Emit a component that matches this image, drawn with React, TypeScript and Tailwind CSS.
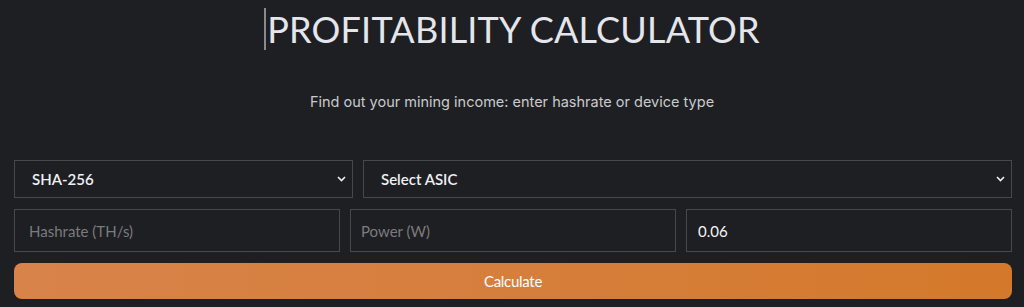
import React, { useState } from 'react';

const Chevron = () => (
  <svg width="9" height="6" viewBox="0 0 9 6" className="shrink-0">
    <path d="M1 1l3.5 3.5L8 1" fill="none" stroke="#f0f0f0" strokeWidth="1.6" />
  </svg>
);

export default function App() {
  const [hashrate, setHashrate] = useState('');
  const [power, setPower] = useState('');
  const [price, setPrice] = useState('0.06');

  return (
    <div className="w-[1024px] h-[307px] bg-[#1e1f22] overflow-hidden font-['Lato',sans-serif]">
      {/* заголовок */}
      <div className="flex justify-center pt-[6px]">
        <div className="flex items-center">
          <span className="w-[2px] h-[42px] bg-[#8a8a8a] mr-[1px]"></span>
          <h1 className="text-[36px] leading-[46px] font-normal text-[#e4e6ec] tracking-[0.2px]">PROFITABILITY CALCULATOR</h1>
        </div>
      </div>
      <p className="mt-[40px] text-center font-['Inter',sans-serif] text-[14.5px] leading-[20px] text-[#c9cacd]">
        Find out your mining income: enter hashrate or device type
      </p>

      <div className="mt-[48px] pl-[14px] pr-[12px] flex flex-col gap-[11px]">
        <div className="flex gap-[10px]">
          <div className="w-[339px] h-[38px] border border-[#47484b] flex items-center justify-between pl-[17px] pr-[6px]">
            <span className="text-[15px] text-[#eef0f4] font-semibold">SHA-256</span>
            <Chevron />
          </div>
          <div className="flex-1 h-[38px] border border-[#47484b] flex items-center justify-between pl-[17px] pr-[6px]">
            <span className="text-[15px] text-[#eef0f4] font-semibold">Select ASIC</span>
            <Chevron />
          </div>
        </div>
        <div className="grid grid-cols-3 gap-[10px]">
          <input
            value={hashrate}
            onChange={e => setHashrate(e.target.value)}
            placeholder="Hashrate (TH/s)"
            className="w-full h-[43px] bg-transparent border border-[#47484b] px-[14px] text-[15px] text-[#eef0f4] placeholder:text-[#7a7b7e] outline-none"
          />
          <input
            value={power}
            onChange={e => setPower(e.target.value)}
            placeholder="Power (W)"
            className="w-full h-[43px] bg-transparent border border-[#47484b] px-[10px] text-[15px] text-[#eef0f4] placeholder:text-[#7a7b7e] outline-none"
          />
          <input
            value={price}
            onChange={e => setPrice(e.target.value)}
            className="w-full h-[43px] bg-transparent border border-[#47484b] px-[11px] text-[15px] text-[#f4f5f7] outline-none"
          />
        </div>
        <button className="h-[36px] rounded-[8px] bg-gradient-to-r from-[#d8834a] to-[#d4792a] text-white text-[15px] tracking-[-0.3px]">
          Calculate
        </button>
      </div>
    </div>
  );
}
